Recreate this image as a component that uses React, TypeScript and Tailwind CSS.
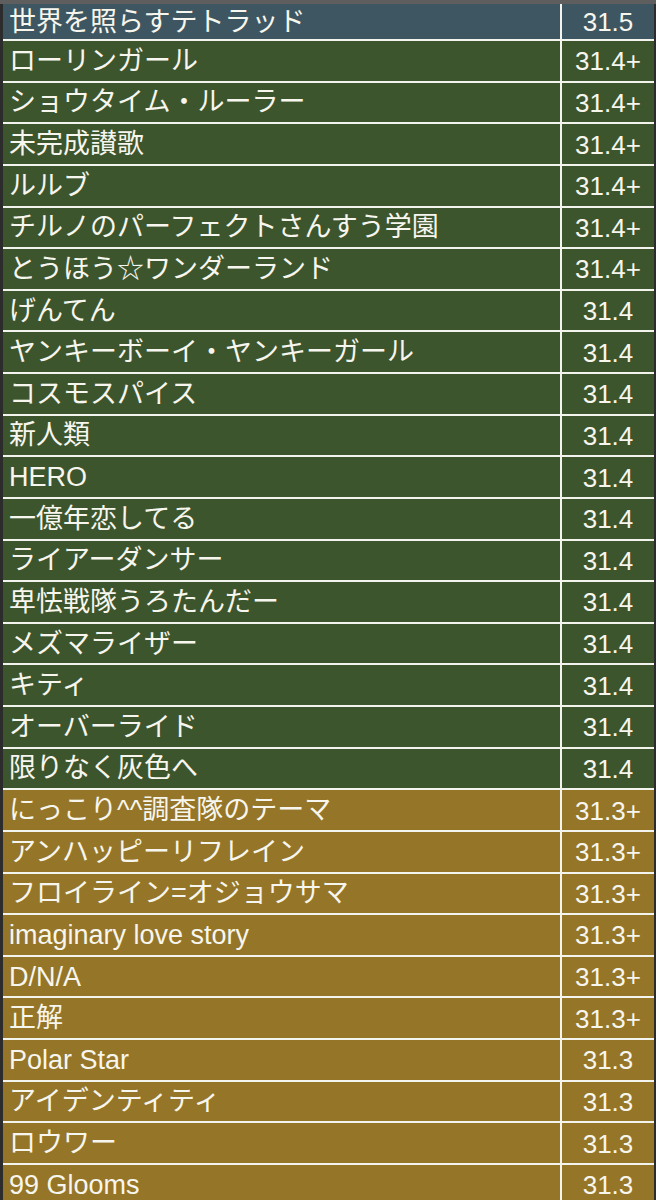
const rows: { name: string; level: string; tone: "blue" | "green" | "gold" }[] = [
  { name: "世界を照らすテトラッド", level: "31.5", tone: "blue" },
  { name: "ローリンガール", level: "31.4+", tone: "green" },
  { name: "ショウタイム・ルーラー", level: "31.4+", tone: "green" },
  { name: "未完成讃歌", level: "31.4+", tone: "green" },
  { name: "ルルブ", level: "31.4+", tone: "green" },
  { name: "チルノのパーフェクトさんすう学園", level: "31.4+", tone: "green" },
  { name: "とうほう☆ワンダーランド", level: "31.4+", tone: "green" },
  { name: "げんてん", level: "31.4", tone: "green" },
  { name: "ヤンキーボーイ・ヤンキーガール", level: "31.4", tone: "green" },
  { name: "コスモスパイス", level: "31.4", tone: "green" },
  { name: "新人類", level: "31.4", tone: "green" },
  { name: "HERO", level: "31.4", tone: "green" },
  { name: "一億年恋してる", level: "31.4", tone: "green" },
  { name: "ライアーダンサー", level: "31.4", tone: "green" },
  { name: "卑怯戦隊うろたんだー", level: "31.4", tone: "green" },
  { name: "メズマライザー", level: "31.4", tone: "green" },
  { name: "キティ", level: "31.4", tone: "green" },
  { name: "オーバーライド", level: "31.4", tone: "green" },
  { name: "限りなく灰色へ", level: "31.4", tone: "green" },
  { name: "にっこり^^調査隊のテーマ", level: "31.3+", tone: "gold" },
  { name: "アンハッピーリフレイン", level: "31.3+", tone: "gold" },
  { name: "フロイライン=オジョウサマ", level: "31.3+", tone: "gold" },
  { name: "imaginary love story", level: "31.3+", tone: "gold" },
  { name: "D/N/A", level: "31.3+", tone: "gold" },
  { name: "正解", level: "31.3+", tone: "gold" },
  { name: "Polar Star", level: "31.3", tone: "gold" },
  { name: "アイデンティティ", level: "31.3", tone: "gold" },
  { name: "ロウワー", level: "31.3", tone: "gold" },
  { name: "99 Glooms", level: "31.3", tone: "gold" },
];

const toneBg = {
  blue: "bg-[#3e5661]",
  green: "bg-[#3d552d]",
  gold: "bg-[#957527]",
};

export default function App() {
  return (
    <div
      className="w-[656px] h-[1200px] overflow-hidden bg-[#2c2c2c] text-[#f7f6ee] leading-none"
      style={{ fontFamily: '"Liberation Sans", Arial, "Noto Sans CJK JP", sans-serif' }}
    >
      <div className="h-[4px] bg-[#5e5e5e]" />
      <div className="flex flex-col pl-[3px] pr-[2px]">
        {rows.map((row, i) => (
          <div
            key={row.name}
            className={`flex ${toneBg[row.tone]} ${
              i === 0 ? "h-[35px]" : "h-[41.63px] border-t-2 border-[#f4f4ee]"
            }`}
          >
            <div className="flex-1 flex items-center pl-[6px] pt-[1px] text-[27px] whitespace-nowrap">
              {row.name}
            </div>
            <div className="w-[94px] flex items-center justify-center pt-[1px] text-[26px] border-l-2 border-[#f4f4ee]">
              {row.level}
            </div>
          </div>
        ))}
      </div>
    </div>
  );
}
